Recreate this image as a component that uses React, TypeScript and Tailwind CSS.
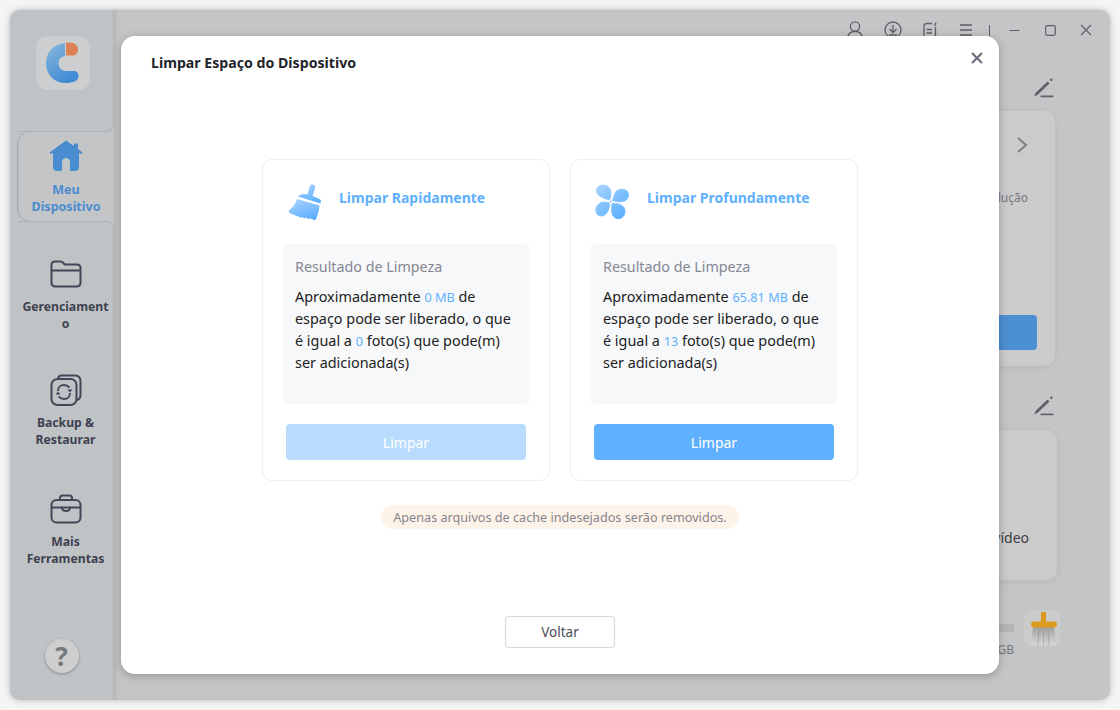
import React from "react";

const font = { fontFamily: '"Noto Sans", "Open Sans", sans-serif' };

function Pencil() {
  return (
    <svg width="22" height="20" viewBox="0 0 22 20" fill="none">
      <path d="M1 18.5 L3 14.5 L14.5 3.5 L16.5 5.5 L5 16.5 Z" fill="#5f6066" />
      <circle cx="18.3" cy="1.8" r="1.3" fill="#5f6066" />
      <path d="M7.5 18.4 H20.5" stroke="#5f6066" strokeWidth="1.6" />
    </svg>
  );
}

function Logo() {
  return (
    <svg width="34" height="42" viewBox="0 0 34 42" fill="none">
      <defs>
        <linearGradient id="lg1" x1="0" y1="0" x2="0.6" y2="1">
          <stop offset="0" stopColor="#8bb9dc" />
          <stop offset="1" stopColor="#3f8bd4" />
        </linearGradient>
      </defs>
      <path d="M19 1 V14 C14 15 12.5 18 12.5 21.5 C12.5 26 16 29 20 29 H28 C31 29 32.5 31.5 32.5 34 C32.5 37 30 39.5 27 40 C24 41 21 41 19 41 C8 41 0 32 0 21 C0 10 8 2 19 1 Z" fill="url(#lg1)" />
      <path d="M20 0.5 H24 C29 0.5 32 4 32 7.5 C32 11.5 29 13.5 26 13.5 H20 Z" fill="#dd8055" />
    </svg>
  );
}

function Home() {
  return (
    <svg width="34" height="32" viewBox="0 0 34 32" fill="#4a8cd0">
      <path d="M17 0.5 L25 6 V3.5 H29 V9 L33.5 12.5 L32.5 14 L30 13 V27 C30 29.5 28.5 31 26 31 H8 C5.5 31 4 29.5 4 27 V13 L1.5 14 L0.5 12.5 Z" />
      <path d="M13 31 V22 C13 19.5 15 18 17 18 C19 18 21 19.5 21 22 V31 Z" fill="#c3c6c8" />
    </svg>
  );
}

function Folder() {
  return (
    <svg width="32" height="28" viewBox="0 0 32 28" fill="none" stroke="#434656" strokeWidth="2">
      <path d="M1.5 7 V5 C1.5 3 3 1.5 5 1.5 H11 C13 1.5 13.5 4.5 15.5 4.5 H27 C29 4.5 30.5 6 30.5 8 V22.5 C30.5 25 29 26.5 26.5 26.5 H5.5 C3 26.5 1.5 25 1.5 22.5 Z" />
      <path d="M1.5 10.5 H30.5" />
    </svg>
  );
}

function BackupIcon() {
  return (
    <svg width="32" height="32" viewBox="0 0 32 32" fill="none" stroke="#434656" strokeWidth="2">
      <path d="M8 4.5 C8.5 2.5 9.5 1.5 11.5 1.5 H25 C28.5 1.5 30.5 3.5 30.5 7 V21 C30.5 24 29 25.5 27 26" />
      <rect x="1.5" y="5" width="25" height="26" rx="6" />
      <path d="M8 17 C8 13 11 11 14 11 C16.5 11 18 12 19.5 13.5" strokeWidth="1.8" />
      <path d="M20 19 C20 23 17 25 14 25 C11.5 25 10 24 8.5 22.5" strokeWidth="1.8" />
      <path d="M17.5 15.5 H22.5 L20 18.5 Z M5.5 20.5 H10.5 L8 17.5 Z" fill="#434656" stroke="none" />
    </svg>
  );
}

function Briefcase() {
  return (
    <svg width="32" height="30" viewBox="0 0 32 30" fill="none" stroke="#434656" strokeWidth="2">
      <path d="M10 6 V4 C10 2.5 11 1.5 12.5 1.5 H19.5 C21 1.5 22 2.5 22 4 V6" />
      <rect x="1.5" y="6" width="29" height="22.5" rx="5" />
      <path d="M1.5 13.5 H12 M20 13.5 H30.5" />
      <path d="M12 13.5 C12 16 13.5 17 16 17 C18.5 17 20 16 20 13.5 Z" />
    </svg>
  );
}

function HeaderIcons() {
  const c = "#5d5f66";
  return (
    <div className="flex items-center h-[40px] pr-[18px] justify-end">
      <svg className="mr-[20px]" width="18" height="18" viewBox="0 0 18 18" fill="none" stroke={c} strokeWidth="1.3">
        <circle cx="9" cy="5.5" r="4.6" />
        <path d="M1.5 17 C2 12.5 5 10.5 9 10.5 C13 10.5 16 12.5 16.5 17" />
      </svg>
      <svg className="mr-[21px]" width="18" height="18" viewBox="0 0 18 18" fill="none" stroke={c} strokeWidth="1.3">
        <circle cx="9" cy="9" r="8" />
        <path d="M9 4 V11 M5.5 8 L9 11.5 L12.5 8 M5 14 H13" />
      </svg>
      <svg className="mr-[21px]" width="15" height="16" viewBox="0 0 15 16" fill="none" stroke={c} strokeWidth="1.3">
        <path d="M9 1.5 H4 C2 1.5 1 2.5 1 4 V15 H12.5 V5" />
        <path d="M13 0.5 L11.5 4" />
        <path d="M3.5 7.5 H9 M3.5 11 H9" />
      </svg>
      <svg className="mr-[16px]" width="14" height="12" viewBox="0 0 14 12" fill="none" stroke={c} strokeWidth="1.4">
        <path d="M1 1 H13 M1 6 H13 M1 11 H13" />
      </svg>
      <div className="w-px h-[11px] bg-[#5d5f66] mr-[19px]" />
      <svg className="mr-[25px]" width="11" height="11" viewBox="0 0 11 11" fill="none" stroke={c} strokeWidth="1.2">
        <path d="M0.5 5.5 H10.5" />
      </svg>
      <svg className="mr-[24px]" width="11" height="11" viewBox="0 0 11 11" fill="none" stroke={c} strokeWidth="1.2">
        <rect x="0.7" y="0.7" width="9.6" height="9.6" rx="1.5" />
      </svg>
      <svg width="12" height="12" viewBox="0 0 12 12" fill="none" stroke={c} strokeWidth="1.1">
        <path d="M1 1 L11 11 M11 1 L1 11" />
      </svg>
    </div>
  );
}

function Broom() {
  return (
    <svg width="36" height="40" viewBox="6 7 36 40" fill="none">
      <defs>
        <linearGradient id="bg1" x1="0.2" y1="0" x2="0.7" y2="1">
          <stop offset="0" stopColor="#a6d2ff" />
          <stop offset="1" stopColor="#5aaeff" />
        </linearGradient>
      </defs>
      <path d="M30 10.5 C31 9 34 9 35 11 C35.500 12 35 13.500 34.500 15 L32.500 21 C35 22 38.500 23 41 25 L40.500 28.500 L18 21.500 C20 19 24.500 18.500 27.500 19.500 Z" fill="url(#bg1)" />
      <path d="M17 24 L39.500 30.500 C39 36 37.500 41 35.500 45 C33.500 45 32 44.500 30.500 43 C29.500 44.500 27.500 44 26 42.500 C25 43.500 23.500 43.500 22 42 C21 43 19.500 42.500 18 41 C17 41.500 15.500 41 14.500 39.500 C13.500 40 12 39.500 10.500 38.500 C9 37.500 8 36.500 9 35.500 C12.500 33 15.500 29 17 24 Z" fill="url(#bg1)" />
    </svg>
  );
}

function Fan() {
  return (
    <svg width="36" height="38" viewBox="8 7 36 38" fill="none" stroke="url(#bg2)" strokeWidth="0.8" strokeLinejoin="round">
      <defs>
        <linearGradient id="bg2" gradientUnits="userSpaceOnUse" x1="10" y1="9" x2="40" y2="43">
          <stop offset="0" stopColor="#a8d4ff" />
          <stop offset="1" stopColor="#58adff" />
        </linearGradient>
      </defs>
      <path d="M23.500 24 C20 23 12 21 10.500 16 C9.500 12 13 9 17 9 C22 9 25 13 25 17 C25 20 24.500 22 23.500 24 Z" fill="url(#bg2)" />
      <path d="M26.500 24 C28 22 28 18 30 15.500 C33 12.500 38 12.500 41 15 C43.500 18 43 22 39.500 24.500 C36 26.500 31 26 26.500 24.500 Z" fill="url(#bg2)" />
      <path d="M26.500 27.500 C30 27 35 28 37.500 31 C40 34 39.500 39 36 41.500 C32.500 44 28 42.500 26.500 39 C25 35.500 25.500 31 26 27.500 Z" fill="url(#bg2)" />
      <path d="M23.500 27 C23.500 30 23 35 19.500 38.500 C16 41 12 40 10.500 37 C9 33 10.500 29 14 27 C17 25.500 21 26 23.500 27 Z" fill="url(#bg2)" />
      <circle cx="24.800" cy="25.500" r="1" fill="url(#bg2)" stroke="none" />
    </svg>
  );
}

function SmallBroom() {
  return (
    <svg width="36" height="36" viewBox="6 5 36 36" fill="none">
      <defs>
        <linearGradient id="bg3" x1="0" y1="0" x2="0" y2="1">
          <stop offset="0" stopColor="#a0a0a0" />
          <stop offset="1" stopColor="#d8d8d8" />
        </linearGradient>
      </defs>
      <path d="M15 22 L13 40 H38 L36 22 Z" fill="url(#bg3)" />
      <path d="M21 24 L20 40 M25.500 24 V40 M30 24 L31 40" stroke="#8a8a8a" strokeWidth="0.5" />
      <rect x="23" y="7" width="5" height="11" rx="1" fill="#dc9b1f" />
      <rect x="13" y="16.500" width="26" height="6" rx="3" fill="#dc9b1f" />
    </svg>
  );
}

function NavItem({ icon, label, cls }: { icon: React.ReactNode; label: React.ReactNode; cls: string }) {
  return (
    <div className={`flex flex-col items-center ${cls}`}>
      <div className="h-[36px] flex items-center justify-center">{icon}</div>
      <div className="mt-[6px] w-[90px] text-center text-[12.2px] font-bold leading-[17px] text-[#3e4150] [overflow-wrap:anywhere]">{label}</div>
    </div>
  );
}

function CleanCard({
  icon,
  title,
  mb,
  photos,
  disabled,
}: {
  icon: React.ReactNode;
  title: string;
  mb: string;
  photos: string;
  disabled?: boolean;
}) {
  return (
    <div className="w-[288px] h-[322px] border border-[#edeef0] rounded-[10px] flex flex-col px-[20px] bg-white">
      <div className="flex items-center h-[84px] pl-[3px]">
        <div className="w-[36px] flex justify-center">{icon}</div>
        <div className="ml-[17px] text-[14px] font-bold text-[#5fb0ff] leading-[20px] -mt-[9px]">{title}</div>
      </div>
      <div className="w-[246px] h-[160px] bg-[#f7f8fa] rounded-[4px] px-[12px] pt-[12px]">
        <div className="text-[14.3px] leading-[22px] text-[#858793]">Resultado de Limpeza</div>
        <div className="mt-[8px] text-[14.4px] leading-[22px] text-[#1c1d22]">
          Aproximadamente <span className="text-[12.7px] text-[#5fb0ff]">{mb}</span> de espaço pode ser liberado, o que é igual a{" "}
          <span className="text-[12.7px] text-[#5fb0ff]">{photos}</span> foto(s) que pode(m) ser adicionada(s)
        </div>
      </div>
      <button
        className={`mt-[20px] mx-[3px] w-[240px] h-[36px] rounded-[4px] text-[14px] text-white ${disabled ? "bg-[#b9dcfd]" : "bg-[#5fb0ff]"}`}
      >
        Limpar
      </button>
    </div>
  );
}

export default function App() {
  return (
    <div className="relative w-[1120px] h-[710px] bg-[#f4f4f4] p-[10px] overflow-hidden" style={font}>
      <div className="w-[1100px] h-[690px] flex rounded-[10px] overflow-hidden bg-[#c4c5c7] shadow-[0_0_6px_rgba(0,0,0,0.25)]">
        <aside className="w-[104px] shrink-0 flex flex-col bg-[#c0c3c5]">
          <div className="h-[122px] flex flex-col">
            <div className="flex-1 border-r border-[#b1b3b5] pt-[26px] pl-[26px]">
              <div className="w-[54px] h-[54px] rounded-[12px] bg-[#cdcecf] flex items-center justify-center">
                <Logo />
              </div>
            </div>
            <div className="h-[12px] ml-[8px] border-r border-b border-[#b1b3b5] rounded-br-[8px]" />
          </div>
          <div className="ml-[8px] h-[89px] rounded-l-[12px] border-l border-[#b5b7b9] bg-[#c4c5c7] flex flex-col items-center pt-[6px] pr-[1px] shadow-[-1px_0_1px_rgba(0,0,0,0.12)]">
            <div className="h-[36px] flex items-center justify-center"><Home /></div>
            <div className="mt-[7px] w-[88px] text-center text-[12.5px] font-bold leading-[17px] text-[#4a8cd0]">
              Meu Dispositivo
            </div>
          </div>
          <div className="h-[12px] ml-[8px] border-r border-t border-[#b1b3b5] rounded-tr-[8px]" />
          <div className="flex-1 flex flex-col border-r border-[#b1b3b5] pt-[23px] items-center">
            <div className="pl-[8px] flex flex-col items-center">
              <NavItem icon={<Folder />} label="Gerenciamento" cls="" />
              <NavItem icon={<BackupIcon />} label="Backup & Restaurar" cls="mt-[40px]" />
              <NavItem icon={<Briefcase />} label="Mais Ferramentas" cls="mt-[43px]" />
            </div>
            <div className="mt-auto mb-[27px] w-[34px] h-[34px] rounded-full bg-[#cdcecf] shadow-[0_1px_3px_rgba(0,0,0,0.3)] flex items-center justify-center text-[26px] font-bold text-[#77787b] leading-none">
              ?
            </div>
          </div>
        </aside>

        <main className="flex-1 flex flex-col bg-[#c4c5c7] shadow-[inset_3px_0_3px_rgba(0,0,0,0.05)]">
          <HeaderIcons />
          <div className="flex justify-end pr-[55px] mt-[28px]"><Pencil /></div>
          <div className="mt-[13px] ml-auto mr-[55px] w-[460px] h-[255px] rounded-[10px] bg-[#cbcbcc] shadow-[0_1px_6px_rgba(0,0,0,0.08)] flex flex-col items-end pr-[18px]">
            <svg className="mt-[25px] mr-[9px]" width="12" height="18" viewBox="0 0 12 18" fill="none" stroke="#7f8084" strokeWidth="2">
              <path d="M2 2 L10 9 L2 16" />
            </svg>
            <div className="mt-[36px] mr-[9px] text-[12px] leading-[16px] text-[#77787d]">Resolução</div>
            <div className="mt-[109px] w-[100px] h-[35px] rounded-[4px] bg-[#4c8fd3]" />
          </div>
          <div className="flex justify-end pr-[55px] mt-[30px]"><Pencil /></div>
          <div className="mt-[14px] ml-auto mr-[53px] w-[460px] h-[150px] rounded-[10px] bg-[#cbcbcc] shadow-[0_1px_6px_rgba(0,0,0,0.08)] flex items-end justify-end pr-[28px] pb-[32px]">
            <div className="text-[14px] leading-[20px] text-[#3e3f45]">vídeo</div>
          </div>
          <div className="mt-[30px] ml-auto mr-[50px] flex items-start">
            <div className="flex flex-col items-end mr-[10px] pt-[14px]">
              <div className="w-[100px] h-[8px] bg-[#b3b4b6]" />
              <div className="mt-[10px] text-[12px] leading-[16px] text-[#77787d]">GB</div>
            </div>
            <div className="w-[36px] h-[36px] rounded-[8px] bg-[#cbcbcc] flex items-center justify-center"><SmallBroom /></div>
          </div>
        </main>
      </div>

      <div className="absolute left-[121px] top-[36px] w-[878px] h-[638px] bg-white rounded-[14px] shadow-[0_2px_10px_rgba(0,0,0,0.25)] flex flex-col items-center">
        <div className="self-stretch flex items-start justify-between pl-[30px] pr-[16px] pt-[17px] h-[42px]">
          <div className="text-[14.15px] font-bold leading-[20px] text-[#23242b]">Limpar Espaço do Dispositivo</div>
          <svg className="-mt-[1px]" width="12" height="12" viewBox="0 0 12 12" fill="none" stroke="#6f7080" strokeWidth="2.2">
            <path d="M1 1 L11 11 M11 1 L1 11" />
          </svg>
        </div>
        <div className="mt-[81px] flex gap-[20px]">
          <CleanCard icon={<Broom />} title="Limpar Rapidamente" mb="0 MB" photos="0" disabled />
          <CleanCard icon={<Fan />} title="Limpar Profundamente" mb="65.81 MB" photos="13" />
        </div>
        <div className="mt-[24px] h-[24px] px-[12px] rounded-full bg-[#fdf3e8] text-[12.65px] leading-[24px] text-[#858590]">
          Apenas arquivos de cache indesejados serão removidos.
        </div>
        <button className="mt-[87px] w-[110px] h-[32px] rounded-[4px] border border-[#d5d6db] bg-white text-[13.5px] text-[#4a4c58]">
          Voltar
        </button>
      </div>
    </div>
  );
}
